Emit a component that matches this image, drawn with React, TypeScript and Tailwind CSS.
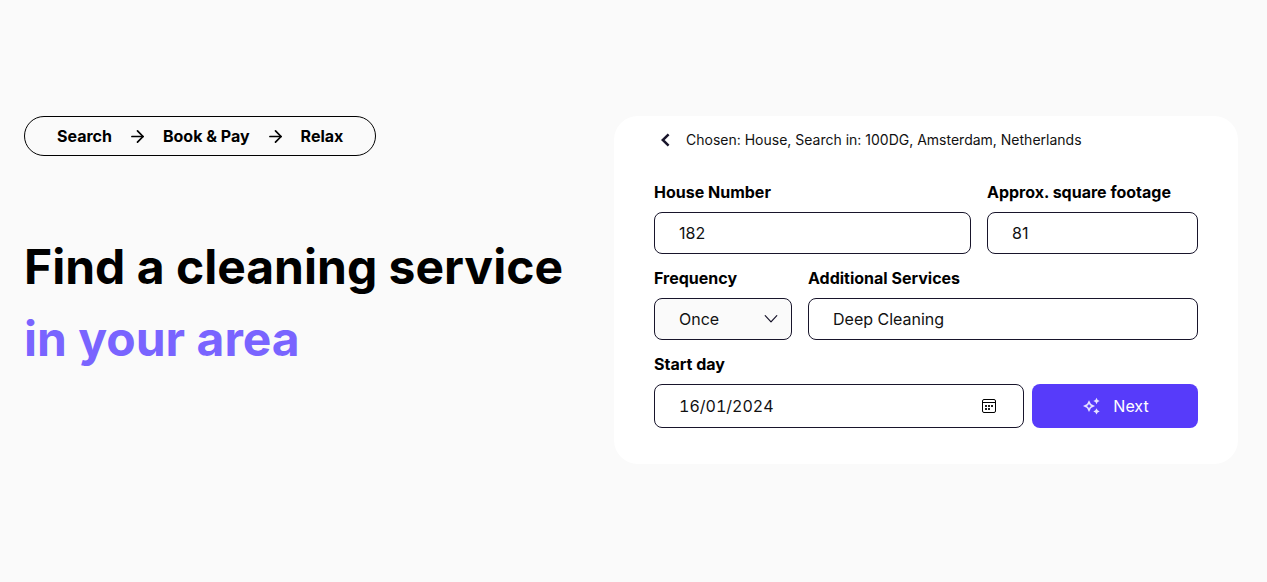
import type { ReactNode } from "react";
import { ArrowRight } from "lucide-react";

const field =
  "w-full rounded-lg border border-[#18152b] px-6 font-normal text-base leading-6 text-[#111] outline-none focus:border-[#5539fa]";

function Field({ id, label, children }: { id: string; label: string; children: ReactNode }) {
  return (
    <div className="flex min-w-0 flex-col gap-2">
      <label htmlFor={id} className="whitespace-nowrap text-base leading-6 font-bold">
        {label}
      </label>
      {children}
    </div>
  );
}

function ChevronLeftIcon() {
  return (
    <svg viewBox="0 0 24 24" className="size-6" fill="none" stroke="#18152b" strokeWidth="2.5" aria-hidden="true">
      <path d="M14.6 6.4 8.8 12l5.8 5.6" />
    </svg>
  );
}

function ChevronDownIcon() {
  return (
    <svg viewBox="0 0 14 14" className="size-3.5" fill="none" stroke="#18152b" strokeWidth="1.2" strokeLinecap="round" strokeLinejoin="round" aria-hidden="true">
      <path d="M1.2 3.6 7 9.8l5.8-6.2" />
    </svg>
  );
}

function CalendarIcon() {
  return (
    <svg viewBox="0 0 16 16" className="size-4" aria-hidden="true">
      <rect x="1.5" y="1.5" width="13" height="13" rx="1.5" fill="none" stroke="#000" />
      <path d="M1.5 4.5h13" stroke="#000" />
      <path d="M4 7h2v2H4zM7 7h2v2H7zM10 7h2v2h-2zM4 10h2v2H4zM7 10h2v2H7z" fill="#222" />
    </svg>
  );
}

function SparklesIcon() {
  return (
    <svg viewBox="0 0 20 20" className="size-5" fill="#e6e2ff" aria-hidden="true">
      <path
        fillRule="evenodd"
        d="M8 4.2 10 8.1 14 10.1 10 12.1 8 16 6 12.1 2 10.1 6 8.1ZM8 7.8 7.2 9.3 5.7 10.1 7.2 10.9 8 12.4 8.8 10.9 10.3 10.1 8.8 9.3Z"
      />
      <path d="M15.5 1.8 16.6 3.9 18.7 5 16.6 6.1 15.5 8.2 14.4 6.1 12.3 5 14.4 3.9ZM15.5 12.2 16.6 14.3 18.7 15.4 16.6 16.5 15.5 18.6 14.4 16.5 12.3 15.4 14.4 14.3Z" />
    </svg>
  );
}

export default function App() {
  return (
    <main className="min-h-screen bg-[#fafafa] font-['Inter',sans-serif] text-black">
      <div className="grid items-start gap-y-12 pt-[116px] pr-[29px] pb-12 pl-6 md:grid-cols-[590fr_624fr]">
        <section className="flex flex-col items-start gap-[75px]">
          <ol className="flex h-10 items-center gap-4 rounded-full border border-black px-8 text-base leading-6 font-bold whitespace-nowrap">
            <li>Search</li>
            <li className="flex items-center gap-4">
              <ArrowRight className="size-[19px]" strokeWidth={2.2} aria-hidden="true" />
              Book &amp; Pay
            </li>
            <li className="flex items-center gap-4">
              <ArrowRight className="size-[19px]" strokeWidth={2.2} aria-hidden="true" />
              Relax
            </li>
          </ol>
          <h1 className="text-5xl leading-[72px] font-bold">
            Find a cleaning service
            <span className="block text-[#7964ff]">in your area</span>
          </h1>
        </section>

        <form className="rounded-3xl bg-white px-10 pt-3 pb-9" onSubmit={(e) => e.preventDefault()}>
          <div className="mb-7 flex items-center gap-2">
            <button type="button" aria-label="Back" className="cursor-pointer">
              <ChevronLeftIcon />
            </button>
            <p className="text-sm leading-6 font-normal text-[#111]">
              Chosen: House, Search in: 100DG, Amsterdam, Netherlands
            </p>
          </div>

          <div className="flex flex-col gap-3">
            <div className="grid grid-cols-[317fr_211fr] gap-4">
              <Field id="house-number" label="House Number">
                <input id="house-number" type="text" defaultValue="182" className={`${field} h-[42px]`} />
              </Field>
              <Field id="footage" label="Approx. square footage">
                <input id="footage" type="text" defaultValue="81" className={`${field} h-[42px]`} />
              </Field>
            </div>

            <div className="grid grid-cols-[138fr_390fr] gap-4">
              <Field id="frequency" label="Frequency">
                <div className="relative">
                  <select id="frequency" defaultValue="Once" className={`${field} h-[42px] appearance-none bg-[#fafafa]`}>
                    <option>Once</option>
                    <option>Weekly</option>
                    <option>Monthly</option>
                  </select>
                  <span className="pointer-events-none absolute inset-y-0 right-3.5 flex items-center">
                    <ChevronDownIcon />
                  </span>
                </div>
              </Field>
              <Field id="services" label="Additional Services">
                <input id="services" type="text" defaultValue="Deep Cleaning" className={`${field} h-[42px]`} />
              </Field>
            </div>

            <div className="grid grid-cols-[370fr_166fr] items-end gap-2">
              <Field id="start-day" label="Start day">
                <div className="relative">
                  <input id="start-day" type="text" defaultValue="16/01/2024" className={`${field} h-11 tabular-nums`} />
                  <button type="button" aria-label="Open calendar" className="absolute inset-y-0 right-[27px] flex cursor-pointer items-center">
                    <CalendarIcon />
                  </button>
                </div>
              </Field>
              <button
                type="submit"
                className="flex h-11 cursor-pointer items-center justify-center gap-3 rounded-lg bg-[#573bfa] text-base leading-6 text-white"
              >
                <SparklesIcon />
                Next
              </button>
            </div>
          </div>
        </form>
      </div>
    </main>
  );
}
